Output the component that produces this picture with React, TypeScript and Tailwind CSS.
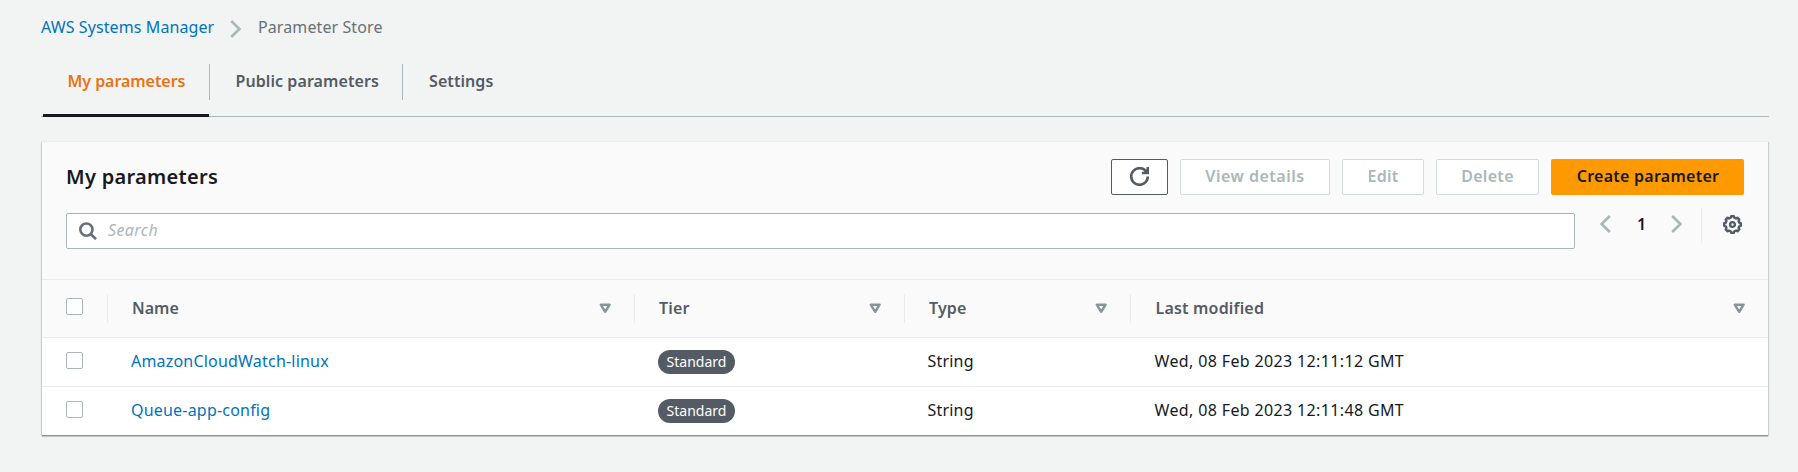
import React from 'react';

function Chevron({ flip = false }: { flip?: boolean }) {
  return (
    <svg width="12" height="18" viewBox="0 0 12 18" fill="none" stroke="#aab7b8" strokeWidth="2.6" className={flip ? '-scale-x-100' : ''}>
      <path d="M1.2 1l8.2 8-8.2 8" />
    </svg>
  );
}

function SortIcon() {
  return (
    <svg width="13" height="11" viewBox="0 0 13 11" fill="none" stroke="#879596" strokeWidth="2.5" strokeLinejoin="round" className="shrink-0">
      <path d="M1.8 1.7h8.8L6.2 8.8z" />
    </svg>
  );
}

function RefreshIcon() {
  return (
    <svg width="19" height="19" viewBox="0 0 16 16" fill="none" stroke="#545b64" strokeWidth="2.2">
      <path d="M10 5h5V0" />
      <path d="M11.5 4.5h3V1.5z" fill="#545b64" stroke="none" />
      <path d="M15 8a6.957 6.957 0 0 1-7 7 6.957 6.957 0 0 1-7-7 6.957 6.957 0 0 1 7-7 6.87 6.87 0 0 1 6.3 4" />
    </svg>
  );
}

const gearPoints = Array.from({ length: 8 }, (_, tooth) =>
  [
    [-15, 7],
    [-9, 8.4],
    [9, 8.4],
    [15, 7],
  ].map(([offset, radius]) => {
    const angle = ((tooth * 45 + offset) * Math.PI) / 180;
    return `${(9.5 + radius * Math.cos(angle)).toFixed(2)},${(9.5 + radius * Math.sin(angle)).toFixed(2)}`;
  }).join(' '),
).join(' ');

function GearIcon() {
  return (
    <svg width="19" height="19" viewBox="0 0 19 19" fill="none" stroke="#545b64" strokeWidth="2.4" strokeLinejoin="round">
      <polygon points={gearPoints} />
      <circle cx="9.5" cy="9.5" r="2.4" />
    </svg>
  );
}

function SearchIcon() {
  return (
    <svg width="18" height="18" viewBox="0 0 18 18" fill="none" stroke="#687078" strokeWidth="2.6">
      <circle cx="7.4" cy="7.6" r="6.1" />
      <path d="M11.8 12l5.2 5.2" />
    </svg>
  );
}

function Checkbox() {
  return <span className="block size-[17px] rounded-[2px] border border-[#aab7b8] bg-white" />;
}

const columns = 'grid grid-cols-[66px_527px_270px_226px_637px]';

const headers = [
  { label: 'Name', style: 'pl-[24px] tracking-normal', line: true },
  { label: 'Tier', style: 'pl-[24px] tracking-[0.15px]', line: true },
  { label: 'Type', style: 'pl-[24px] tracking-[0.15px]', line: true },
  { label: 'Last modified', style: 'pl-[24.5px] tracking-[0.18px]', line: false },
];

const rows = [
  { name: 'AmazonCloudWatch-linux', modified: 'Wed, 08 Feb 2023 12:11:12 GMT', height: 'h-[49px] border-b border-[#eaeded]' },
  { name: 'Queue-app-config', modified: 'Wed, 08 Feb 2023 12:11:48 GMT', height: 'h-[48px]' },
];

const disabledButton = 'flex h-9 items-center justify-center rounded-[2px] border border-[#d5dbdb] bg-white pb-[2px] font-semibold text-[#aab7b8]';

export default function App() {
  return (
    <div className="h-[472px] w-[1798px] overflow-hidden bg-[#f2f3f3] pl-[42px] font-['Noto_Sans',sans-serif] text-base leading-6 text-[#16191f]">
      <nav className="flex h-[64px] pt-[15px]">
        <a className="-ml-px w-[189px] tracking-[0.1px] text-[#0073bb]">AWS Systems Manager</a>
        <span className="w-[28px] pt-[5px]"><Chevron /></span>
        <span className="tracking-[0.1px] text-[#687078]">Parameter Store</span>
      </nav>

      <div className="-ml-px flex h-[53px] w-[1728px] border-b border-[#aab7b8] pl-[2px] font-semibold text-[#545b64]">
        <div className="-mb-px flex w-[166px] flex-col border-b-[3px] border-[#16191f]">
          <span className="flex h-9 items-center pb-[2px] pl-[24.5px] tracking-[-0.05px] text-[#ec7211]">My parameters</span>
        </div>
        <span className="flex h-9 w-[193px] items-center border-l border-[#aab7b8] pb-[2px] pl-[25.5px] tracking-[0.08px]">Public parameters</span>
        <span className="flex h-9 items-center border-l border-[#aab7b8] pb-[2px] pl-[26px] tracking-[0.08px]">Settings</span>
      </div>

      <section className="mt-6 w-[1726px] border-t border-[#eaeded] bg-white shadow-[0_1px_0_0_#879596,0_2px_1px_0_rgba(0,28,36,0.15),1px_1px_1px_0_rgba(0,28,36,0.15),-1px_1px_1px_0_rgba(0,28,36,0.15)]">
        <header className="h-[138px] border-b border-[#eaeded] bg-[#fafafa] pl-6 pt-[17px]">
          <div className="flex h-9 w-[1678px] items-center gap-3">
            <h2 className="mr-auto pb-px text-xl font-semibold tracking-[0.3px]">My parameters</h2>
            <button className="flex h-9 w-[57px] items-center justify-center rounded-[2px] border border-[#545b64] bg-white pb-[1px]"><RefreshIcon /></button>
            <button className={`${disabledButton} w-[150px] tracking-[0.5px]`}>View details</button>
            <button className={`${disabledButton} w-[82px] tracking-[0.3px]`}>Edit</button>
            <button className={`${disabledButton} w-[103px] tracking-[0.3px]`}>Delete</button>
            <button className="flex h-9 w-[193px] items-center justify-center rounded-[2px] bg-[#ff9900] pb-[2px] pl-px font-semibold tracking-[0.25px]">Create parameter</button>
          </div>
          <div className="flex pt-3">
            <div className="mt-[6px] flex h-9 w-[1509px] items-center rounded-[2px] border border-[#aab7b8] bg-white pl-3">
              <SearchIcon />
              <span className="pb-[2px] pl-[11px] italic tracking-[0.4px] text-[#aab7b8]">Search</span>
            </div>
            <div className="flex h-9 items-center">
              <span className="w-[61px] pb-[2px] pl-[24px]"><Chevron flip /></span>
              <span className="w-[35px] pb-[2px] pl-px font-semibold">1</span>
              <span className="w-[30px] pb-[2px]"><Chevron /></span>
              <span className="flex h-9 items-center border-l border-[#eaeded] pb-[2px] pl-[21px]"><GearIcon /></span>
            </div>
          </div>
        </header>

        <div className={`${columns} h-[58px] border-b border-[#eaeded] bg-[#fafafa] pt-[14px]`}>
          <div className="h-[29px] border-r border-[#eaeded] pl-6 pt-1"><Checkbox /></div>
          {headers.map(({ label, style, line }) => (
            <div key={label} className={`flex h-[29px] items-center justify-between pr-[22px] font-semibold text-[#545b64] ${style} ${line ? 'border-r border-[#eaeded]' : ''}`}>
              <span className="pb-px">{label}</span>
              <SortIcon />
            </div>
          ))}
        </div>

        {rows.map(({ name, modified, height }) => (
          <div key={name} className={`${columns} ${height} pt-3`}>
            <div className="pl-6 pt-[2px]"><Checkbox /></div>
            <a className="-mt-px pl-[23px] tracking-[0.2px] text-[#0073bb]">{name}</a>
            <div className="pl-[23px]"><span className="flex h-6 w-[77px] items-center justify-center rounded-[12px] bg-[#545b64] text-sm leading-6 text-white">Standard</span></div>
            <span className="-mt-px pl-[22.5px] tracking-[0.2px]">String</span>
            <span className="-mt-px pl-[23.5px] tracking-[0.36px]">{modified}</span>
          </div>
        ))}
      </section>
    </div>
  );
}
